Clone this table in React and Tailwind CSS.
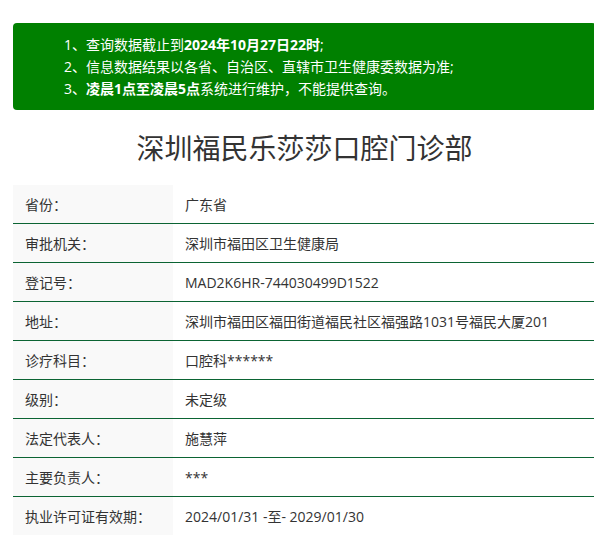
import React from "react";

const rows = [
  ["省份：", "广东省"],
  ["审批机关：", "深圳市福田区卫生健康局"],
  ["登记号：", "MAD2K6HR-744030499D1522"],
  ["地址：", "深圳市福田区福田街道福民社区福强路1031号福民大厦201"],
  ["诊疗科目：", "口腔科******"],
  ["级别：", "未定级"],
  ["法定代表人：", "施慧萍"],
  ["主要负责人：", "***"],
  ["执业许可证有效期：", "2024/01/31 -至- 2029/01/30"],
];

const font = { fontFamily: '"Open Sans", "Noto Sans CJK SC", sans-serif' };

export default function App() {
  return (
    <div className="w-[594px] h-[535px] overflow-hidden bg-white text-[#333]" style={font}>
      <div className="ml-[13px] w-[583px]">
        <div className="mt-[23px] h-[87px] rounded bg-[#008000] text-white text-[14px] leading-[22px] pl-[51px] pt-[11px]">
          <p>1、查询数据截止到<b>2024年10月27日22时</b>;</p>
          <p>2、信息数据结果以各省、自治区、直辖市卫生健康委数据为准;</p>
          <p>3、<b>凌晨1点至凌晨5点</b>系统进行维护，不能提供查询。</p>
        </div>

        <h1 className="h-[75px] flex items-center justify-center text-[28px] text-[#333]">
          深圳福民乐莎莎口腔门诊部
        </h1>

        <div className="text-[14px]">
          {rows.map(([k, v]) => (
            <div key={k} className="flex h-[39px] border-b border-[#0b6433]">
              <div className="w-[160px] bg-[#f9f9f9] pl-[12px] flex items-center">{k}</div>
              <div className="flex-1 pl-[12px] flex items-center">{v}</div>
            </div>
          ))}
        </div>
      </div>
    </div>
  );
}
